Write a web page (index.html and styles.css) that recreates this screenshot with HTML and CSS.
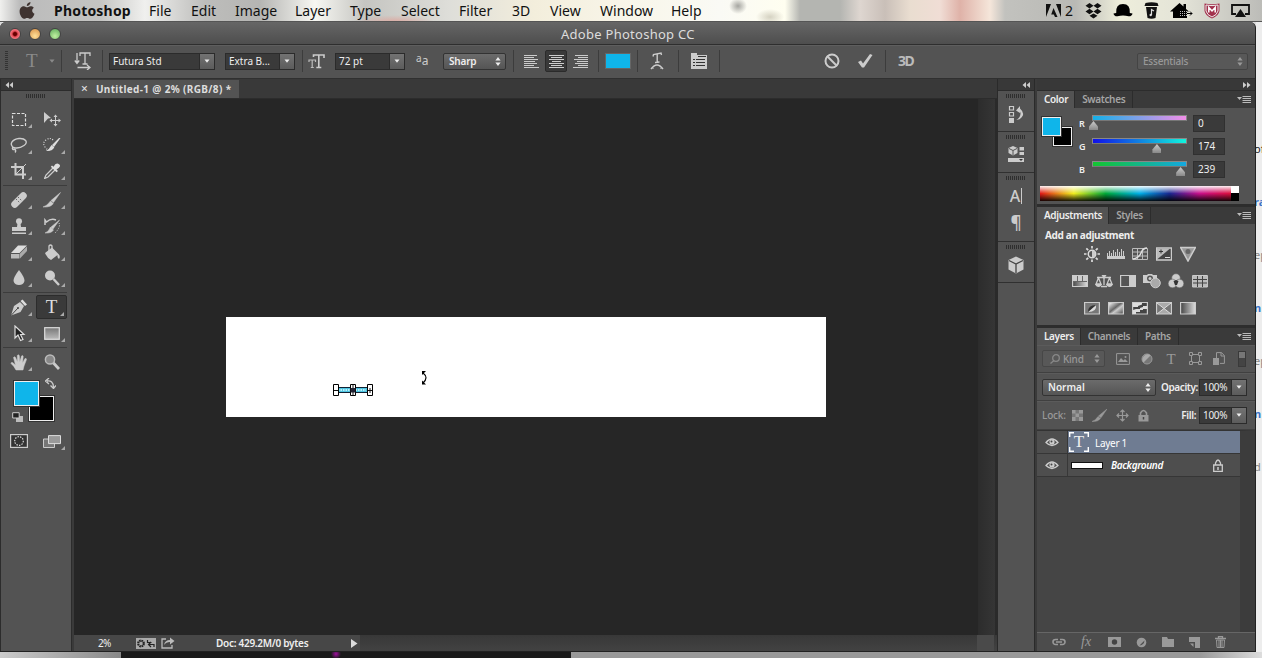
FILE: index.html
```
<!DOCTYPE html>
<html lang="en">
<head>
  <meta charset="UTF-8" />
  <meta name="viewport" content="width=device-width, initial-scale=1.0"/>
  <title>Adobe Photoshop CC</title>
  <link rel="stylesheet" href="styles.css">
</head>
<body>
  <!-- Shared glyphs -->
  <svg class="defs" width="0" height="0">
    <defs>
      <linearGradient id="fade" x1="0" x2="1"><stop offset="0" stop-color="#444"/><stop offset="1" stop-color="#ddd"/></linearGradient>
      <linearGradient id="fade-down" x1="0" x2="0" y1="0" y2="1"><stop offset="0" stop-color="#777"/><stop offset="1" stop-color="#bbb"/></linearGradient>
      <linearGradient id="stripe" x1="0" x2="1" y1="0" y2="1"><stop offset=".1" stop-color="#ddd"/><stop offset=".45" stop-color="#666"/><stop offset=".6" stop-color="#ccc"/><stop offset=".9" stop-color="#666"/></linearGradient>
    </defs>
    <symbol id="updown" viewBox="0 0 6 9"><path d="M3 0l2.600 3.500H.4zM3 9l2.600-3.500H.4z" fill="currentColor"/></symbol>
    <symbol id="down" viewBox="0 0 6 4"><path d="M.5.5h5L3 3.800z" fill="currentColor"/></symbol>
    <symbol id="panel-menu" viewBox="0 0 14 9"><path d="M0 2h5L2.500 5z" fill="#bbb"/><path d="M5.500 1.500h8.500M5.500 3.500h8.500M5.500 5.500h8.500M5.500 7.500h8.500" stroke="#bbb"/></symbol>
    <symbol id="left2" viewBox="0 0 8 6"><path d="M4 0v6L.5 3zM8 0v6L4.500 3z" fill="#ccc"/></symbol>
    <symbol id="right2" viewBox="0 0 8 6"><path d="M0 0v6l3.500-3zM4 0v6l3.500-3z" fill="#ccc"/></symbol>
    <symbol id="eye" viewBox="0 0 14 10"><path d="M1 5.500Q7-1.500 13 5.500Q7 11.500 1 5.500z" fill="none" stroke="#ccc" stroke-width="1.300"/><circle cx="7" cy="5" r="2.600" fill="#ccc"/><circle cx="6.500" cy="4.500" r="1" fill="#444"/></symbol>
  </svg>

  <div class="menubar">
    <svg class="apple" width="18" height="20" viewBox="0 0 18 20"><path d="M12.500 1c.2 2-1.600 4-3.700 4C8.600 3 10.500 1.200 12.500 1zM15.800 6.800c-2.400 1.500-2 4.900.7 6-.7 2-2.300 5-4.100 5-1.300 0-1.700-.8-3.200-.8s-2 .8-3.200.8C3.800 17.800 1.600 13.600 1.600 10.600c0-4.900 4-6.200 6.200-4.700 1 .5 1.600.5 2.600 0 1.800-1 4-.6 5.400.9z" fill="#3f3330"/></svg>
    <div class="menus">
      <b>Photoshop</b><span>File</span><span>Edit</span><span>Image</span><span>Layer</span><span>Type</span><span>Select</span><span>Filter</span><span>3D</span><span>View</span><span>Window</span><span>Help</span>
    </div>
    <div class="tray">
      <svg width="15" height="14" viewBox="0 0 15 14"><path d="M0 0h5L0 13zM10 0h5v13zM7.500 4L11.500 13H9l-1.200-2.500H5.200z" fill="#111"/></svg>
      <span class="count">2</span>
      <svg width="17" height="16" viewBox="0 0 17 16"><path d="M4.500 0L8.500 2.700 4.500 5.400.5 2.700zM12.500 0l4 2.700-4 2.700-4-2.700zM4.500 5.800l4 2.700-4 2.700-4-2.700zM12.500 5.800l4 2.700-4 2.700-4-2.700zM8.500 10.500l4 2.300-4 2.700-4-2.700z" fill="#111"/></svg>
      <svg width="20" height="15" viewBox="0 0 20 15"><path d="M3.200 10Q2.500 1 10 1t6.800 9l2.700.5q-.5 3-4 2.800-5.500-1.500-11 0-3.500.2-4-2.800z" fill="#000"/></svg>
      <svg width="15" height="17" viewBox="0 0 15 17"><path d="M1.500 1Q7.500-.5 13.500 1L14.500 4H.5zM2 5h11l-1.500 11q-4 1.500-8 0z" fill="#111"/><path d="M7.500 13V7.500l2.500 1.500" fill="none" stroke="#ddd" stroke-width="1.200"/><circle cx="6.700" cy="13" r="1.200" fill="#ddd"/></svg>
      <svg width="23" height="16" viewBox="0 0 23 16"><path d="M0 8.500L9.500 0l4 3.500V1H16v5l3 2.500h-2V15H3V8.500z" fill="#000"/><path d="M10 8.500h7M10 10.500h7M10 12.500h7" stroke="#bbb" stroke-dasharray="1 1"/><path d="M17 10.500h5M20 8.500l2 2-2 2" stroke="#000" fill="none"/></svg>
      <svg width="16" height="16" viewBox="0 0 16 16"><path d="M.5.5Q8 2 15.500.5V8q-1 5-7.500 7.500Q1.500 13 .5 8z" fill="#a3324d"/><path d="M2 2q6 1.200 12 0v6q-1 4-6 6-5-2-6-6z" fill="none" stroke="#eee"/><path d="M4.800 9.500v-5L8 8l3.200-3.500v5" fill="none" stroke="#fff" stroke-width="1.500"/></svg>
      <svg width="19" height="13" viewBox="0 0 19 13"><path d="M5 10H1V1h17v9h-4" fill="none" stroke="#111" stroke-width="1.800"/><path d="M9.500 5l5.500 8H4z" fill="#111"/></svg>
    </div>
  </div>

  <div class="desktop">
    <div class="window">
      <div class="titlebar">
        <div class="lights"><i class="light close"></i><i class="light minimize"></i><i class="light zoom"></i></div>
        <span class="title">Adobe Photoshop CC</span>
      </div>

      <!-- Type tool options -->
      <div class="options">
        <div class="group g-tool"><i class="vgrip"></i><span class="serif-t dim">T</span><svg class="dim" width="6" height="4"><use href="#down"/></svg></div>
        <div class="group g-orient"><svg width="18" height="18" viewBox="0 0 18 18"><path d="M3 1v10M.8 8.500L3 11.500l2.200-3M3.500 15.500h12M13 13l3 2.500-3 2.500M6 4V1h10v3M11 1v11M8.500 12h5" fill="none" stroke="#ccc" stroke-width="1.300"/></svg></div>
        <div class="group g-font">
          <div class="combo family"><span>Futura Std</span><b><svg width="6" height="4"><use href="#down"/></svg></b></div>
          <div class="combo weight"><span>Extra B...</span><b><svg width="6" height="4"><use href="#down"/></svg></b></div>
        </div>
        <div class="group g-size">
          <svg width="17" height="15" viewBox="0 0 17 15"><path d="M5.500 3V1h10.500v3M10.800 1v12.500M8.300 13.500h5" fill="none" stroke="#ccc" stroke-width="1.600"/><path d="M1 8V6h6.500v2M4.200 6v7.500M2.800 13.500h3" fill="none" stroke="#bbb" stroke-width="1.200"/></svg>
          <div class="combo size"><span>72 pt</span><b><svg width="6" height="4"><use href="#down"/></svg></b></div>
          <span class="aa"><sup>a</sup>a</span>
          <div class="popup sharp">Sharp<svg width="6" height="9"><use href="#updown"/></svg></div>
        </div>
        <div class="group g-align">
          <svg width="15" height="14" viewBox="0 0 15 14"><path d="M0 1.500h13M0 3.500h10M0 5.500h14M0 7.500h11M0 9.500h13M0 11.500h10M0 13.500h15" stroke="#ccc"/></svg>
          <span class="pressed"><svg width="15" height="14" viewBox="0 0 15 14"><path d="M0 1.500h15M2 3.500h11M0 5.500h15M3 7.500h9M0 9.500h15M2 11.500h11M0 13.500h15" stroke="#ccc"/></svg></span>
          <svg width="15" height="14" viewBox="0 0 15 14"><path d="M2 1.500h13M5 3.500h10M1 5.500h14M4 7.500h11M2 9.500h13M5 11.500h10M0 13.500h15" stroke="#ccc"/></svg>
        </div>
        <div class="group g-color"><i class="text-color"></i></div>
        <div class="group g-warp"><svg width="14" height="18" viewBox="0 0 14 18"><path d="M3 4.500l.5-2L11 1l.5 2M7.200 1.800V10M5 10.500l4.500-.5M1 17q6-8 12 0M2 15.500l1.500 1M12 15.500l-1.500 1" fill="none" stroke="#ccc" stroke-width="1.400"/></svg></div>
        <div class="group g-panels"><svg width="16" height="16" viewBox="0 0 16 16"><path d="M0 0h6v2h10v14H0z" fill="#ccc"/><path d="M7 3.500h8M2 6.500h2M5 6.500h9M2 9.500h2M5 9.500h9M2 12.500h2M5 12.500h9" stroke="#333"/></svg></div>
        <div class="group g-commit">
          <svg width="16" height="16" viewBox="0 0 16 16"><path d="M3 3l10 10" stroke="#ccc" stroke-width="2"/><circle cx="8" cy="8" r="6.500" fill="none" stroke="#ccc" stroke-width="2"/></svg>
          <svg width="16" height="14" viewBox="0 0 16 14"><path d="M1 8l3-1.500L6 9.500 13 0l2.500 1L7 13.500H5z" fill="#ccc"/></svg>
        </div>
        <span class="three-d">3D</span>
        <div class="popup workspace-menu">Essentials<svg width="6" height="9"><use href="#updown"/></svg></div>
      </div>

      <div class="workspace">
        <!-- Tools -->
        <div class="tools">
          <div class="strip"><svg width="8" height="6"><use href="#left2"/></svg></div>
          <i class="grip"></i>
          <div class="toolset first">
            <span class="tool more"><svg width="16" height="16" viewBox="0 0 16 16"><rect x="1.500" y="2.500" width="13" height="12" fill="none" stroke="#ddd" stroke-width="1.200" stroke-dasharray="3 1.500"/></svg></span>
            <span class="tool"><svg width="18" height="16" viewBox="0 0 18 16"><path d="M1 1l7 6-3 .5L1 12z" fill="#ccc"/><path d="M12.500 5v9M8 9.500h9" stroke="#ccc"/><path d="M12.500 3.500l2 2.500h-4zM12.500 15.500l2-2.500h-4zM6.500 9.500L9 7.500v4zM18 9.500l-2.500-2v4z" fill="#ccc"/></svg></span>
            <span class="tool more"><svg width="18" height="16" viewBox="0 0 18 16"><path d="M4 11C-2 7 3 2 9 1.500S19 5 14 8.500 5 11 3.500 10.500 2 13 4 12.500s2 2 1 3" fill="none" stroke="#ccc" stroke-width="1.400"/></svg></span>
            <span class="tool more"><svg width="18" height="16" viewBox="0 0 18 16"><path d="M10 3Q7 0 3 3T2 10t5 3" fill="none" stroke="#ddd" stroke-width="1.200" stroke-dasharray="1 1.500"/><path d="M17.500 1L11 10 9 8 16 1zM8.500 8l2.800 2.500Q9 14.500 3 14 6.500 12 8.500 8z" fill="#ddd"/></svg></span>
            <span class="tool more"><svg width="16" height="16" viewBox="0 0 16 16"><path d="M4.500 0v11.500H15M0 4h12v12" fill="none" stroke="#ccc" stroke-width="2"/><path d="M4 12L15 1" stroke="#ccc"/></svg></span>
            <span class="tool more"><svg width="16" height="16" viewBox="0 0 16 16"><path d="M9 5L2 12l-1.500 3.500L4 14l7-7" fill="none" stroke="#ccc" stroke-width="1.300"/><path d="M8 2.500l1.500 1.300Q12-1 15 1.200T12.500 6.500L14 8l-1.500 1.300L6.800 3.800z" fill="#ddd"/></svg></span>
          </div>
          <div class="toolset">
            <span class="tool more"><svg width="18" height="18" viewBox="0 0 18 18"><rect x="-.5" y="5.500" width="19" height="7" rx="3.500" transform="rotate(-45 9 9)" fill="#ccc"/><path d="M8 6l4 4M6 8l4 4" stroke="#666" stroke-dasharray="1.500 1.500"/></svg></span>
            <span class="tool more"><svg width="18" height="16" viewBox="0 0 18 16"><path d="M17.500.5L10.500 10.500 8 8.500zM7.500 9l2.800 2.500Q8 15.500 0 15q4-1 7.500-6z" fill="#ccc" stroke="#ccc" stroke-width=".5"/></svg></span>
            <span class="tool more"><svg width="16" height="16" viewBox="0 0 16 16"><circle cx="8" cy="3.300" r="3" fill="#ccc"/><path d="M6.500 5h3l.5 4h5v4H1V9h5zM1 14.500h14V16H1z" fill="#ccc"/></svg></span>
            <span class="tool more"><svg width="18" height="16" viewBox="0 0 18 16"><path d="M16.500 2L10 11 8 9zM7.500 9l3 3q-2 3.500-8.500 3 3.500-1 5.500-6z" fill="#ccc" stroke="#ccc" stroke-width=".5"/><path d="M2 7V2l1.500 2Q8 0 13 2" fill="none" stroke="#ccc" stroke-width="1.500"/><path d="M16 5q2 4-4 10" fill="none" stroke="#ddd" stroke-dasharray="1 1.500"/></svg></span>
            <span class="tool more"><svg width="18" height="16" viewBox="0 0 18 16"><path d="M8 1.500h9L9.500 9H1z" fill="#ddd"/><path d="M1 10h8.500v4.500H1z" fill="#bbb"/><path d="M10 9.500l7-7v4.500l-7 7.500z" fill="#aaa"/></svg></span>
            <span class="tool more"><svg width="18" height="17" viewBox="0 0 18 17"><path d="M2 9l7-5.500 6 6Q18 12 16 15q-2-1-1.500-4L8 16Q4 14 2 9z" fill="#ccc"/><path d="M6 8V2q1.500-2 3 0v5" fill="none" stroke="#ccc" stroke-width="1.300"/></svg></span>
            <span class="tool more"><svg width="16" height="16" viewBox="0 0 16 16"><path d="M8 0q6 8 5.500 11-1 4-5.500 4t-5.500-4Q2 8 8 0z" fill="#ccc"/></svg></span>
            <span class="tool more"><svg width="16" height="16" viewBox="0 0 16 16"><circle cx="6" cy="5.500" r="5" fill="#ccc"/><path d="M9.500 9l5.500 6" stroke="#ccc" stroke-width="2.400"/></svg></span>
          </div>
          <div class="toolset">
            <span class="tool more"><svg width="18" height="17" viewBox="0 0 18 17"><path d="M1 16.500L4 7l6-4 4 4-3.500 6z" fill="#ccc"/><path d="M10.500 2l2-1.500 4.500 5-2 1.500z" fill="#ddd"/><path d="M1 16.500L8 9" stroke="#444"/><circle cx="8" cy="9" r="1" fill="#444"/></svg></span>
            <span class="tool more active"><span class="serif-t">T</span></span>
            <span class="tool more"><svg width="14" height="17" viewBox="0 0 14 17"><path d="M3 1v12l3-3 2.500 5.500 2.500-1L8.500 9.500H12z" fill="#222" stroke="#ddd" stroke-width="1.200"/></svg></span>
            <span class="tool more"><svg width="16" height="13" viewBox="0 0 16 13"><rect x=".7" y=".7" width="14.600" height="11.600" fill="url(#fade-down)" stroke="#ddd" stroke-width="1.200"/></svg></span>
          </div>
          <div class="toolset">
            <span class="tool more"><svg width="18" height="17" viewBox="0 0 18 17"><path d="M6 16Q4 12 1 9.500q0-1.500 1.500-1L5.500 11 3.500 3.500q1-1.500 2 0L7.500 8 7.300 1.500q1-1.500 2 0L9.800 8l1.700-6q1.500-1 1.700.5L12.500 9l2.500-4.500q1.500-.5 1.500 1L14 12 13 16z" fill="#ccc" stroke="#ccc" stroke-width=".5"/></svg></span>
            <span class="tool"><svg width="16" height="16" viewBox="0 0 16 16"><circle cx="6" cy="5.500" r="4.600" fill="#888" stroke="#bbb" stroke-width="1.500"/><path d="M9.500 9l5.500 6" stroke="#ccc" stroke-width="2.800"/></svg></span>
          </div>
          <div class="colors">
            <i class="chip back"></i><i class="chip front"></i>
            <svg class="swap" width="11" height="11" viewBox="0 0 11 11"><path d="M2 3q6-1 6.500 6M4 0L.5 3 4 6M5.500 7.500l3 3 2.500-3" fill="none" stroke="#ccc" stroke-width="1.300"/></svg>
            <svg class="reset" width="11" height="11" viewBox="0 0 11 11"><path d="M4 4h7v6H4z" fill="#bbb"/><path d="M.7.7h6.500V6H.7z" fill="#222" stroke="#ccc"/></svg>
          </div>
          <div class="toolset modes">
            <span class="tool"><svg width="18" height="14" viewBox="0 0 18 14"><rect x=".6" y=".6" width="16.800" height="12.800" fill="#333" stroke="#ccc" stroke-width="1.200"/><circle cx="9" cy="7" r="4.300" fill="none" stroke="#ddd" stroke-width="1.200" stroke-dasharray="1.400 1.200"/></svg></span>
            <span class="tool more"><svg width="18" height="13" viewBox="0 0 18 13"><path d="M.5 4h11v8.500H.5z" fill="#777" stroke="#ccc"/><path d="M5.500.6h12v8h-12z" fill="#999" stroke="#ddd"/></svg></span>
          </div>
        </div>

        <!-- Document -->
        <div class="document">
          <div class="tabs"><div class="doc-tab"><span class="x">×</span>Untitled-1 @ 2% (RGB/8) *</div></div>
          <div class="pasteboard">
            <div class="canvas">
              <svg class="transform-box" width="42" height="15" viewBox="0 0 42 15"><path d="M3 4.500h36v5H3z" fill="#4fc4e2" stroke="#123"/><path d="M7 7h28" stroke="#dff" stroke-width="1.500" stroke-dasharray="1.500 1"/><path d="M2.500 1.500h5v11h-5zM36.500 1.500h5v11h-5zM19.500 1.500h5v11h-5z" fill="#fff" stroke="#000"/><path d="M3 7.500h4M37 7.500h4M39 5v5M22 2v10" stroke="#111"/><path d="M19.500 5h5v4.500h-5z" fill="#223"/></svg>
              <svg class="rotate-cursor" width="7" height="14" viewBox="0 0 7 14"><path d="M2 2q6 4.500 0 10" fill="none" stroke="#000" stroke-width="1.200"/><path d="M1 0h4L1 4zM1 9.500l4 4H1z" fill="#000"/></svg>
            </div>
            <i class="scroll-track"></i>
          </div>
          <div class="status">
            <span class="zoom-level">2%</span>
            <svg width="20" height="11" viewBox="0 0 20 11"><path d="M0 0h20v11H0z" fill="#aaa"/><circle cx="5" cy="5.500" r="2.800" fill="none" stroke="#222" stroke-width="2.200" stroke-dasharray="1.600 .6"/><path d="M18 9V6.500h-5m2-2.500l-2.500 2.500L15 9M11.500 2v2.500h4" fill="none" stroke="#222" stroke-width="1.200"/></svg>
            <svg width="14" height="12" viewBox="0 0 14 12"><path d="M5 2H1v9h10V8" fill="none" stroke="#bbb" stroke-width="1.300"/><path d="M3 8q1-5 6-5V.5L13.500 4 9 7.500V5Q5 5 3 8z" fill="#bbb"/></svg>
            <span class="doc-size">Doc: 429.2M/0 bytes</span>
            <svg class="play" width="7" height="9" viewBox="0 0 7 9"><path d="M0 0l6.500 4.500L0 9z" fill="#ddd"/></svg>
            <i class="corner"></i>
          </div>
        </div>

        <!-- Collapsed panels -->
        <div class="dock">
          <div class="strip"><svg width="8" height="6"><use href="#left2"/></svg></div>
          <div class="dock-item"><i class="grip"></i><svg width="16" height="19" viewBox="0 0 16 19"><path d="M1.500 1.500h4V5h-4zM1.500 7.500h4V11h-4z" fill="none" stroke="#ccc" stroke-width="1.200"/><path d="M1 13h5v5H1z" fill="#ccc"/><path d="M8 5.500L12 1v2.500q5.500 5 1.500 9-1.500 2-5 2.500Q14 11 12 6.500V8z" fill="#ccc"/></svg></div>
          <div class="dock-item"><i class="grip"></i><svg width="16" height="16" viewBox="0 0 16 16"><path d="M5 0l4.500 2v5L5 9.500.5 7V2z" fill="#ccc"/><path d="M1 2.500l4 2 4-2M5 4.500V9" fill="none" stroke="#555"/><path d="M11.500 1H16v3.500h-4.500zM11.500 6H16v3h-4.500zM0 12h16v4H0z" fill="#ccc"/><path d="M11 13h4l-2 2z" fill="#333"/></svg></div>
          <div class="dock-item tall"><i class="grip"></i><span class="type-a">A<i></i></span><span class="pilcrow">¶</span></div>
          <div class="dock-item"><i class="grip"></i><svg width="16" height="18" viewBox="0 0 16 18"><path d="M8 .5l7.500 3.500v9.500L8 17.500.5 13.500V4z" fill="#ccc"/><path d="M1 4.500L8 8l7-3.500M8 8v9" fill="none" stroke="#444" stroke-width="1.300"/></svg></div>
        </div>

        <div class="panels">
          <div class="strip end"><svg width="8" height="6"><use href="#right2"/></svg></div>

          <div class="panel color">
            <div class="panel-tabs"><span class="on">Color</span><span>Swatches</span><svg width="14" height="9"><use href="#panel-menu"/></svg></div>
            <div class="mixer">
              <div class="chips"><i class="chip back"></i><i class="chip front"></i></div>
              <div class="sliders">
                <div class="slider"><b>R</b><span class="ramp red"><i style="left: 0%"></i></span><span class="value">0</span></div>
                <div class="slider"><b>G</b><span class="ramp green"><i style="left: 68.200%"></i></span><span class="value">174</span></div>
                <div class="slider"><b>B</b><span class="ramp blue"><i style="left: 93.700%"></i></span><span class="value">239</span></div>
              </div>
            </div>
            <div class="spectrum"><i></i></div>
          </div>

          <div class="panel adjust">
            <div class="panel-tabs"><span class="on">Adjustments</span><span>Styles</span><svg width="14" height="9"><use href="#panel-menu"/></svg></div>
            <h2>Add an adjustment</h2>
            <div class="adj-row">
              <svg viewBox="0 0 16 16"><circle cx="8" cy="8" r="3.700" fill="none" stroke="#ddd" stroke-width="1.500"/><path d="M8 4.500v7a3.500 3.500 0 0 0 0-7z" fill="#ccc"/><path d="M8 0v2.500M8 13.500V16M0 8h2.500M13.500 8H16M2.300 2.300l1.900 1.900M11.800 11.800l1.900 1.900M2.300 13.700l1.900-1.900M11.800 4.200l1.900-1.900" stroke="#ddd" stroke-width="1.700"/></svg>
              <svg class="wide" viewBox="0 0 18 16"><path d="M0 10h18v3H0z" fill="#ccc"/><path d="M.5 10V7M2.500 10V5M4.500 10V7M6.500 10V4M8.500 10V6M10.500 10V3M12.500 10V6M14.500 10V3M16.500 10V5" stroke="#ccc"/></svg>
              <svg viewBox="0 0 16 16"><path d="M.5 2.500h15v11H.5zM5.500 2.500v11M10.500 2.500v11M.5 6h15M.5 10h15" fill="none" stroke="#bbb"/><path d="M1 13Q7 12 9 7t6-5" fill="none" stroke="#ddd" stroke-width="1.500"/></svg>
              <svg viewBox="0 0 16 16"><path d="M.6 2h14.800v12H.6z" fill="#444" stroke="#ccc" stroke-width="1.300"/><path d="M1 13.500V2.500h13z" fill="#bbb"/><path d="M3 5.500h4M5 3.500v4" stroke="#333"/><path d="M9 11.500h5" stroke="#ddd"/></svg>
              <svg viewBox="0 0 16 16"><path d="M.6 1.500h14.800L8 15z" fill="#999" stroke="#ccc" stroke-width="1.500"/><circle cx="8" cy="5.500" r="2.500" fill="#666"/></svg>
            </div>
            <div class="adj-row">
              <svg viewBox="0 0 16 16"><path d="M.6 2.500h14.800v11H.6z" fill="url(#fade)" stroke="#ccc" stroke-width="1.200"/><path d="M1 3h14v5H1z" fill="#ccc"/><path d="M5.500 3v5M10.500 3v5M1 8.500h14" stroke="#666"/></svg>
              <svg class="wide" viewBox="0 0 18 16"><path d="M9 2v10M6 13.500h6M2 4.500h14M3.500 5L1 11h5zM14.500 5L12 11h5z" fill="none" stroke="#ccc" stroke-width="1.300"/><path d="M0 11h7q-1 3-3.500 3T0 11zM11 11h7q-1 3-3.500 3T11 11zM6.500 2h5L9 6z" fill="#ccc"/></svg>
              <svg viewBox="0 0 16 16"><path d="M.6 2.500h14.800v11H.6z" fill="#ccc" stroke="#ccc" stroke-width="1.200"/><path d="M1.200 3H9v10H1.200z" fill="#555"/></svg>
              <svg class="wide" viewBox="0 0 18 16"><path d="M0 2h4l1-1h4l1 1h4v8H0z" fill="#ccc"/><circle cx="7" cy="5.500" r="3" fill="#555"/><circle cx="7" cy="5.500" r="1.500" fill="#ccc"/><circle cx="12.500" cy="10" r="4.800" fill="#aaa" stroke="#ccc"/></svg>
              <svg viewBox="0 0 16 16"><g fill="#ccc" stroke="#666" stroke-width=".6"><circle cx="8" cy="5" r="4.300"/><circle cx="4.500" cy="10.500" r="4.300"/><circle cx="11.500" cy="10.500" r="4.300"/></g><path d="M8 7l2.500 1-1.500 4H7L5.500 8z" fill="#333"/></svg>
              <svg viewBox="0 0 16 16"><path d="M.6 2.500h14.800v11.500H.6z" fill="#bbb" stroke="#ccc"/><path d="M5.500 3v11M10.500 3v11M1 6.500h14M1 10h14" stroke="#444"/></svg>
            </div>
            <div class="adj-row">
              <svg viewBox="0 0 16 16"><path d="M.6 2.500h14.800v11.500H.6z" fill="#777" stroke="#ccc" stroke-width="1.200"/><path d="M4 12L12 5q1 7-8 7z" fill="#ddd"/><path d="M4 12Q4 5 12 5" fill="#333"/></svg>
              <svg viewBox="0 0 16 16"><path d="M.6 2.500h14.800v11.500H.6z" fill="url(#stripe)" stroke="#ccc" stroke-width="1.200"/></svg>
              <svg viewBox="0 0 16 16"><path d="M.6 2.500h14.800v11.500H.6z" fill="#444" stroke="#ccc" stroke-width="1.200"/><path d="M1 3h9v1.500L6 6v1H1zM1 10l3-1h4V8l3-1V6h4v3h-4v1H8v2H4v2H1z" fill="#ddd"/></svg>
              <svg viewBox="0 0 16 16"><path d="M.6 2.500h14.800v11.500H.6z" fill="#aaa" stroke="#ccc" stroke-width="1.200"/><path d="M1.200 3L8 8.500 1.200 14zM14.800 3L8 8.500l6.800 5.500z" fill="#777"/><path d="M1 3l14 11M15 3L1 14" stroke="#ddd"/></svg>
              <svg viewBox="0 0 16 16"><path d="M.6 2.500h14.800v11.500H.6z" fill="url(#fade)" stroke="#ccc" stroke-width="1.200"/></svg>
            </div>
          </div>

          <div class="panel layers">
            <div class="panel-tabs"><span class="on">Layers</span><span>Channels</span><span>Paths</span><svg width="14" height="9"><use href="#panel-menu"/></svg></div>
            <div class="bar filter">
              <div class="popup kind"><svg width="10" height="10" viewBox="0 0 10 10"><circle cx="6" cy="4" r="3.300" fill="none" stroke="#888" stroke-width="1.300"/><path d="M4 6.500L.5 9.500" stroke="#888" stroke-width="1.300"/></svg>Kind<svg class="arrows" width="6" height="9"><use href="#updown"/></svg></div>
              <svg width="14" height="12" viewBox="0 0 14 12"><path d="M.6.600h12.800v10.800H.6z" fill="none" stroke="#999"/><path d="M2 9l3-4 2.500 2.500L9 6l3 3z" fill="#999"/><circle cx="9.500" cy="4" r="1" fill="#999"/></svg>
              <svg width="12" height="12" viewBox="0 0 12 12"><circle cx="6" cy="6" r="5" fill="#777" stroke="#999"/><path d="M2.500 9.500l7-7A5 5 0 0 0 2.500 9.500z" fill="#aaa"/></svg>
              <span class="filter-t">T</span>
              <svg width="13" height="13" viewBox="0 0 13 13"><path d="M2.500 2.500h8v8h-8z" fill="none" stroke="#999"/><path d="M.5.500h3v3h-3zM9.500.500h3v3h-3zM.5 9.500h3v3h-3zM9.500 9.500h3v3h-3z" fill="#555" stroke="#999"/></svg>
              <svg width="12" height="13" viewBox="0 0 12 13"><path d="M3.500 6V.6h5l2.900 3v7.800H7" fill="none" stroke="#999"/><path d="M0 6h6v7H0z" fill="#999"/><path d="M8 .5V4h3.500" fill="none" stroke="#999"/></svg>
              <i class="toggle"></i>
            </div>
            <div class="bar blend">
              <div class="popup mode">Normal<svg width="6" height="9"><use href="#updown"/></svg></div>
              <b>Opacity:</b>
              <div class="combo pct"><span>100%</span><b><svg width="6" height="4"><use href="#down"/></svg></b></div>
            </div>
            <div class="bar locks">
              <span class="muted">Lock:</span>
              <svg width="11" height="11" viewBox="0 0 11 11"><path d="M0 0h11v11H0z" fill="#777"/><path d="M0 0h3.500v3.500H0zM7 0h4v3.500H7zM3.500 3.500H7V7H3.500zM0 7h3.500v4H0zM7 7h4v4H7z" fill="#999"/></svg>
              <svg width="15" height="13" viewBox="0 0 15 13"><path d="M15 0L9 8.800 6.500 7zM6 7.500L8.500 9.500Q6 13 0 12.500 3.500 11.500 6 7.500z" fill="#999" stroke="#999" stroke-width=".5"/></svg>
              <svg width="13" height="13" viewBox="0 0 13 13"><path d="M6.500 1v11M1 6.500h11M4.500 3l2-2 2 2M4.500 10l2 2 2-2M3 4.500l-2 2 2 2M10 4.500l2 2-2 2" fill="none" stroke="#999" stroke-width="1.200"/></svg>
              <svg width="11" height="13" viewBox="0 0 11 13"><path d="M2.500 6V4q3-5 6 0v2" fill="none" stroke="#999" stroke-width="1.600"/><path d="M.5 6h10v6.500H.5z" fill="#999"/><path d="M5.500 8v2.500" stroke="#444" stroke-width="1.500"/></svg>
              <b class="fill-label">Fill:</b>
              <div class="combo pct"><span>100%</span><b><svg width="6" height="4"><use href="#down"/></svg></b></div>
            </div>
            <div class="layer-list">
              <div class="rows">
                <div class="layer selected">
                  <span class="vis"><svg width="14" height="10"><use href="#eye"/></svg></span>
                  <span class="info"><span class="type-thumb">T<svg width="20" height="20" viewBox="0 0 20 20"><path d="M.7 5V.7H5M15 .7h4.300V5M19.300 15v4.300H15M5 19.300H.7V15" fill="none" stroke="#fff" stroke-width="1.400"/></svg></span><span class="name">Layer 1</span></span>
                </div>
                <div class="layer">
                  <span class="vis"><svg width="14" height="10"><use href="#eye"/></svg></span>
                  <span class="info"><i class="thumb"></i><em>Background</em><svg class="lock" width="10" height="13" viewBox="0 0 10 13"><path d="M2.500 6V4q2.500-6 5 0v2M.7 6h8.600v6.300H.7z" fill="none" stroke="#ccc" stroke-width="1.300"/><path d="M5 8v3" stroke="#ccc" stroke-width="1.500"/></svg></span>
                </div>
              </div>
            </div>
            <div class="layer-actions">
              <svg width="14" height="8" viewBox="0 0 14 8"><path d="M6 1.500H3.500a2.500 2.500 0 0 0 0 5H6M8 1.500h2.500a2.500 2.500 0 0 1 0 5H8M4 4h6" fill="none" stroke="#999" stroke-width="1.600"/></svg>
              <span class="fx">fx</span>
              <svg width="13" height="10" viewBox="0 0 13 10"><path d="M0 0h13v10H0z" fill="#999"/><circle cx="6.500" cy="5" r="2.700" fill="#444"/></svg>
              <svg width="11" height="11" viewBox="0 0 11 11"><circle cx="5.500" cy="5.500" r="4.800" fill="#999"/><path d="M8.500 3.500q-.5 4.500-5 5z" fill="#4c4c4c"/></svg>
              <svg width="12" height="10" viewBox="0 0 12 10"><path d="M0 0h5l1 2h6v8H0z" fill="#999"/></svg>
              <svg width="11" height="11" viewBox="0 0 11 11"><path d="M0 0h11v11H6V5H0z" fill="#999"/><path d="M1 6.500h3.500V10z" fill="#999"/></svg>
              <svg width="11" height="12" viewBox="0 0 11 12"><path d="M0 2.500h11M3.500 2V.7h4V2" fill="none" stroke="#999" stroke-width="1.300"/><path d="M1.500 4h8L9 11.500H2zM4 4v7M5.500 4v7M7 4v7" fill="none" stroke="#999"/></svg>
            </div>
          </div>
        </div>
      </div>
    </div>
    <!-- Browser window showing past the right edge -->
    <div class="behind"><span class="w1">of</span><span class="w2">ra</span><span class="w3">ep</span><span class="w4">n</span><span class="w3">ep</span><span class="w4">n</span><span class="w3">d</span></div>
  </div>
  <div class="below"><i class="light-part"></i><i class="dark-part"></i></div>
</body>
</html>
```
FILE: styles.css
```
:root {
  --panel: #535353;
  --dark: #3a3a3a;
  --line: #2a2a2a;
  --cyan: #0fb5ea;
}

* { box-sizing: border-box; }

body {
  margin: 0;
  width: 1262px;
  height: 658px;
  overflow: hidden;
  display: flex;
  flex-direction: column;
  font-family: "Noto Sans", sans-serif;
  font-size: 10px;
  color: #eee;
  background: #ddd;
  white-space: nowrap;
}

svg { display: block; flex: none; }
.defs { position: absolute; }
b { font-weight: 600; }

/* Menu bar */
.menubar {
  height: 22px;
  flex: none;
  display: flex;
  align-items: center;
  color: #111;
  border-bottom: 1px solid #555;
  background:
    radial-gradient(ellipse 40px 7px at 395px 22px, #dcaaa2, transparent),
    radial-gradient(ellipse 9px 8px at 738px 6px, #a5a5a0, transparent),
    radial-gradient(ellipse 14px 8px at 770px 17px, #d5d2c2, transparent),
    linear-gradient(90deg, #f0f0ee 0, #bbb 20px, #c4c4c2 100px, #f0f0ee 145px, #bdbdbb 205px, #b5b5b3 260px, #f7f7f2 315px, #c5c5c1 365px, #deded9 450px, #f3eedc 535px, #f8f5e8 620px, #fafaf5 720px, #fffef0 785px, #b4b5b1 800px, #b4b5b1 840px, #ded6d0 860px, #c9bfb8 885px, #e9ddd0 910px, #f0ddd5 940px, #dfb2a8 960px, #f5e6da 990px, #c2c2be 1005px, #b9b9b5 1075px, #eeeedb 1120px, #e4e4d8 1180px, #bcbcb8 1262px);
}

.apple { margin-left: 18px; }

.menus {
  margin-left: 18px;
  display: grid;
  grid-template-columns: 95px 42px 44px 60px 55px 51px 58px 53px 38px 50px 71px 40px;
  font-size: 14px;
  line-height: 20px;
}
.menus b { font-weight: 700; letter-spacing: .2px; }

.tray {
  margin-left: auto;
  padding-right: 12px;
  display: flex;
  align-items: center;
  gap: 11px;
}
.count { font-size: 14px; line-height: 20px; margin: 0 1px 0 -7px; }

/* Application window */
.desktop { display: flex; height: 630px; flex: none; }

.window {
  width: 1256px;
  display: flex;
  flex-direction: column;
  background: var(--dark);
  border-right: 1px solid #222;
  border-bottom: 1px solid #222;
  border-radius: 6px 6px 0 0;
  overflow: hidden;
}

.titlebar {
  height: 23px;
  flex: none;
  display: flex;
  align-items: center;
  background: linear-gradient(#666, #4e4e4e);
  border-bottom: 1px solid #2e2e2e;
}
.lights { display: flex; gap: 8px; padding: 2px 0 0 9px; width: 561px; }
.light { width: 12px; height: 12px; border-radius: 50%; border: 1px solid #444; }
.close { background: radial-gradient(circle, #600 0 1.500px, #e8505c 3px, #ffb0b0); }
.minimize { background: radial-gradient(circle at 50% 70%, #ffe098, #d98f45); }
.zoom { background: radial-gradient(circle at 50% 70%, #c0f0a0, #5aa858); }
.title { font-size: 13px; color: #ddd; letter-spacing: .27px; line-height: 20px; margin-top: 1px; }

/* Options bar */
.options {
  height: 34px;
  flex: none;
  display: flex;
  align-items: center;
  padding-bottom: 2px;
  background: var(--panel);
  border-bottom: 1px solid #303030;
  border-top: 1px solid #5e5e5e;
}
.group {
  height: 22px;
  flex: none;
  display: flex;
  align-items: center;
  border-right: 1px solid #3c3c3c;
}
.g-tool { width: 62px; padding-left: 5px; }
.g-tool .serif-t { margin: 0 11px 0 18px; }
.vgrip { width: 3px; height: 20px; background: repeating-linear-gradient(#333 0 1px, transparent 1px 2px); }
.g-orient { width: 41px; padding-left: 12px; }
.g-font { width: 200px; padding-left: 6px; gap: 10px; }
.g-size { width: 211px; padding-left: 5px; }
.g-size .size { margin-left: 10px; }
.g-align { width: 85px; padding-left: 10px; gap: 5px; }
.g-color { width: 39px; padding-left: 6px; }
.g-warp { width: 41px; padding-left: 12px; }
.g-panels { width: 41px; padding-left: 12px; }
.g-commit { width: 166px; padding-left: 104px; gap: 17px; }

.serif-t { font: 19px/20px "Liberation Serif", serif; color: #ddd; }
.serif-t.dim, .dim { color: #8a8a8a; }

.combo {
  height: 17px;
  display: flex;
  background: #3a3a3a;
  border: 1px solid #2b2b2b;
  line-height: 15px;
  color: #eee;
}
.combo span { flex: 1; padding-left: 3px; }
.combo b {
  width: 15px;
  display: grid;
  place-items: center;
  background: linear-gradient(#727272, #5c5c5c);
  border-left: 1px solid #2b2b2b;
}
.family { width: 106px; }
.weight { width: 70px; }
.size { width: 70px; }
.aa { margin: 0 11px 0 11px; width: 16px; font-size: 12px; color: #ccc; line-height: 16px; }
.aa sup { font-size: 10px; line-height: 0; vertical-align: 3px; }

.popup {
  height: 17px;
  display: flex;
  align-items: center;
  justify-content: space-between;
  padding: 0 4px 0 5px;
  font-weight: 600;
  color: #eee;
  background: linear-gradient(#6b6b6b, #555);
  border: 1px solid #333;
  border-radius: 2px;
}
.sharp { width: 63px; letter-spacing: -.2px; }
.pressed {
  width: 22px;
  height: 22px;
  margin: 0 1px;
  display: grid;
  place-items: center;
  background: #393939;
  border: 1px solid #2b2b2b;
  border-radius: 2px;
}
.text-color { width: 26px; height: 16px; background: var(--cyan); border: 1px solid #222; outline: 1px solid #666; outline-offset: -1px; }
.three-d { margin-left: 12px; font-size: 14px; font-weight: 700; color: #bbb; letter-spacing: -1.5px; line-height: 20px; }
.workspace-menu { width: 111px; margin: 0 7px 0 auto; color: #999; font-weight: 500; letter-spacing: -.2px; background: #585858; border-color: #444; }

.workspace { flex: 1; display: flex; min-height: 0; }

.strip {
  height: 12px;
  flex: none;
  padding: 3px 0 0 4px;
  background: #383838;
  border-bottom: 1px solid #2c2c2c;
}
.strip.end { display: flex; justify-content: flex-end; padding-right: 4px; }
.grip {
  display: block;
  width: 20px;
  height: 4px;
  background: repeating-linear-gradient(90deg, #2e2e2e 0 1px, transparent 1px 2px);
}

/* Tools panel */
.tools {
  width: 72px;
  flex: none;
  background: var(--panel);
  border-left: 1px solid #2c2c2c;
  border-right: 1px solid #2c2c2c;
}
.tools .grip { margin: 3px 0 0 25px; }
.toolset {
  margin: 0 4px 0 2px;
  display: grid;
  grid-template-columns: 33px 31px;
  grid-auto-rows: 26px;
  border-top: 1px solid #3c3c3c;
  padding: 1px 0;
}
.toolset.first { border-top: 0; margin-top: 7px; }
.tool {
  width: 31px;
  height: 26px;
  display: grid;
  place-items: center;
  position: relative;
}
.more::after {
  content: "";
  position: absolute;
  right: 2px;
  bottom: 4px;
  border-left: 4px solid transparent;
  border-bottom: 4px solid #aaa;
}
.active { background: #3a3a3a; border: 1px solid #2c2c2c; border-radius: 2px; height: 24px; margin-top: 1px; }
.active::after { right: 2px; bottom: 2px; }

.chip { position: absolute; border: 1px solid #eee; outline: 1px solid #333; }
.chip.front { background: var(--cyan); }
.chip.back { background: #000; }

.colors { position: relative; height: 52px; }
.colors .chip { width: 25px; height: 25px; }
.colors .front { left: 13px; top: 5px; }
.colors .back { left: 28px; top: 20px; }
.swap { position: absolute; left: 44px; top: 2px; }
.reset { position: absolute; left: 11px; top: 36px; }
.modes { border-top: 0; padding-top: 0; }

/* Document */
.document {
  width: 923px;
  margin-left: 2px;
  flex: none;
  display: flex;
  flex-direction: column;
}
.tabs { height: 20px; flex: none; background: #393939; border-bottom: 1px solid #2c2c2c; }
.doc-tab {
  width: 165px;
  height: 18px;
  padding-left: 7px;
  margin-top: 1px;
  display: flex;
  gap: 8px;
  font-weight: 700;
  line-height: 18px;
  letter-spacing: .36px;
  color: #ddd;
  background: var(--panel);
}
.x { font-size: 12px; font-weight: 500; letter-spacing: 0; }
.pasteboard {
  flex: 1;
  display: flex;
  justify-content: space-between;
  padding: 218px 0 0 152px;
  background: #262626;
}
.canvas { position: relative; width: 600px; height: 100px; background: #fff; }
.transform-box { position: absolute; left: 105px; top: 66px; }
.rotate-cursor { position: absolute; left: 195px; top: 54px; }
.scroll-track { width: 19px; margin-top: -218px; background: linear-gradient(90deg, #2c2c2c, #353535); border-right: 2px solid #2a2a2a; }

.status {
  height: 16px;
  flex: none;
  display: flex;
  align-items: center;
  padding-left: 24px;
  background: linear-gradient(90deg, #474747 286px, transparent 286px), linear-gradient(#383838, #424242);
}
.zoom-level { width: 38px; letter-spacing: -.7px; }
.status svg + svg { margin-left: 5px; }
.doc-size { margin-left: 41px; width: 135px; font-weight: 600; letter-spacing: -.27px; }
.corner { width: 17px; height: 16px; margin: 0 3px 0 auto; background: #4a4a4a; }

/* Collapsed panel dock */
.dock {
  width: 38px;
  flex: none;
  background: var(--panel);
  border-left: 1px solid #2a2a2a;
  border-right: 1px solid #2a2a2a;
}
.dock .strip { padding-left: 24px; }
.dock-item {
  height: 41px;
  display: flex;
  flex-direction: column;
  align-items: center;
  gap: 7px;
  padding-top: 3px;
  border-bottom: 1px solid #303030;
}
.dock-item.tall { height: 69px; gap: 5px; }
.type-a { display: flex; align-items: center; gap: 1px; font-size: 16px; line-height: 22px; font-weight: 500; color: #ccc; }
.type-a i { width: 1px; height: 16px; background: #ccc; }
.pilcrow { font-size: 17px; line-height: 22px; font-weight: 600; color: #ccc; }

/* Panels */
.panels {
  flex: 1;
  margin-left: 2px;
  display: flex;
  flex-direction: column;
  min-width: 0;
}
.panel { background: var(--panel); flex: none; border-bottom: 3px solid #2d2d2d; }
.color { height: 116px; }
.adjust { height: 121px; }
.layers { flex: 1; display: flex; flex-direction: column; min-height: 0; border-bottom: 0; }

.panel-tabs {
  height: 17px;
  flex: none;
  display: flex;
  background: #3a3a3a;
  font-weight: 600;
  line-height: 17px;
  letter-spacing: -.35px;
  color: #a5a5a5;
}
.panel-tabs span { padding: 0 7px; border-right: 1px solid #2c2c2c; }
.panel-tabs .on { background: var(--panel); color: #eee; padding-right: 6px; }
.panel-tabs svg { margin: 4px 4px 0 auto; }

.mixer { display: flex; height: 76px; padding-top: 5px; }
.chips { position: relative; width: 42px; }
.chips .chip { width: 19px; height: 19px; }
.chips .front { left: 5px; top: 4px; }
.chips .back { left: 16px; top: 14px; }
.slider { display: flex; height: 23px; padding-top: 2px; }
.slider b { width: 13px; line-height: 17px; font-size: 9px; }
.ramp { position: relative; width: 95px; height: 6px; border: 1px solid #888; border-bottom-color: #777; }
.ramp i {
  position: absolute;
  top: 5px;
  margin-left: -4px;
  width: 9px;
  height: 9px;
  background: linear-gradient(#ccc, #888);
  clip-path: polygon(50% 0, 100% 60%, 100% 100%, 0 100%, 0 60%);
}
.red { background: linear-gradient(90deg, #14b0e8, #f28ee8); }
.green { background: linear-gradient(90deg, #1010e8, #10f5dc); }
.blue { background: linear-gradient(90deg, #14c430, #14a8e0); }
.value {
  width: 32px;
  height: 17px;
  margin-left: 6px;
  padding-left: 4px;
  line-height: 15px;
  background: #3a3a3a;
  border: 1px solid #303030;
}
.spectrum {
  width: 199px;
  height: 15px;
  margin: 2px 0 0 3px;
  display: flex;
  justify-content: flex-end;
  background:
    linear-gradient(rgba(255,255,255,.95), rgba(255,255,255,0) 50%, rgba(0,0,0,0) 50%, rgba(0,0,0,.9)),
    linear-gradient(90deg, #e01818, #f0ee20 17%, #00a838 33%, #00b0e8 50%, #182890 65%, #c8108c 80%, #e01028);
}
.spectrum i { width: 8px; background: linear-gradient(#fff 50%, #000 50%); }

.adjust h2 { margin: 0; padding: 3px 0 0 8px; font-size: 10px; font-weight: 700; line-height: 16px; letter-spacing: -.35px; }
.adj-row { display: flex; justify-content: center; gap: 8px; width: 206px; height: 27px; align-items: center; }
h2 + .adj-row { margin-top: -3px; }
.adj-row svg { width: 16px; height: 16px; }
.adj-row .wide { width: 18px; margin: 0 -1px; }

.bar { display: flex; align-items: center; height: 28px; flex: none; padding-left: 5px; border-bottom: 1px solid #404040; border-top: 1px solid #5b5b5b; }
.kind { width: 63px; color: #999; font-weight: 500; letter-spacing: -.2px; border-color: #474747; background: #585858; padding-left: 7px; justify-content: flex-start; gap: 3px; margin-right: 12px; }
.kind .arrows { margin-left: auto; }
.filter { gap: 11px; padding-bottom: 1px; }
.kind + svg { margin-left: -12px; }
.filter-t { font: 15px/16px "Liberation Serif", serif; color: #999; width: 12px; text-align: center; margin: 0 1px; }
.toggle { width: 8px; height: 16px; margin-left: 2px; background: linear-gradient(#777 45%, #444 45%); border: 1px solid #3a3a3a; }
.mode { width: 114px; margin-right: 5px; }
.blend > b, .locks > b { font-weight: 600; letter-spacing: -.4px; }
.pct { width: 48px; margin-left: auto; margin-right: 8px; letter-spacing: -.3px; }
.locks { gap: 9px; height: 29px; padding-bottom: 1px; }
.muted { color: #999; font-weight: 500; margin-right: -5px; width: 26px; letter-spacing: -.2px; }
.fill-label { margin-left: auto; }
.locks .pct { margin-left: -6px; }

.layer-list { flex: 1; background: #454545; border-right: 15px solid #3c3c3c; border-top: 1px solid #333; }
.layer { display: flex; height: 23px; border-bottom: 1px solid #363636; background: #4e4e4e; }
.vis { width: 31px; display: grid; place-items: center; border-right: 1px solid #383838; }
.info { flex: 1; display: flex; align-items: center; color: #fff; }
.selected .info { background: #6f7c92; }
.name { padding-top: 2px; letter-spacing: -.3px; }
.type-thumb { position: relative; width: 20px; height: 20px; margin: 0 6px 0 1px; text-align: center; font: 17px/19px "Liberation Serif", serif; color: #eee; }
.type-thumb svg { position: absolute; left: 0; top: 0; }
.thumb { width: 32px; height: 7px; margin: 0 8px 0 3px; background: #fff; border: 1px solid #111; }
.info em { font-weight: 600; letter-spacing: -.35px; }
.lock { margin: 0 17px 0 auto; }
.layer-actions { height: 19px; flex: none; display: flex; align-items: center; gap: 15px; padding-left: 15px; background: #4c4c4c; border-top: 1px solid #666; }
.fx { font: italic 14px/14px "Liberation Serif", serif; color: #999; width: 12px; }

/* Desktop around the window */
.behind { width: 6px; overflow: hidden; padding-top: 119px; background: #ededed; color: #555; }
.behind span { display: block; height: 53px; font-size: 11px; margin-left: -2px; }
.behind .w1 { color: #222; }
.behind .w2, .behind .w4 { color: #3b74c9; font-weight: 700; }
.behind .w3 { color: #888; }
.below { flex: 1; display: flex; background: linear-gradient(90deg, #999 1200px, #ddd 1262px); }
.light-part { width: 121px; background: linear-gradient(90deg, #ccc, #888); }
.dark-part { width: 450px; background: radial-gradient(circle 5px at 215px 2px, #a010a0, transparent), #1a1a1a; }
```
